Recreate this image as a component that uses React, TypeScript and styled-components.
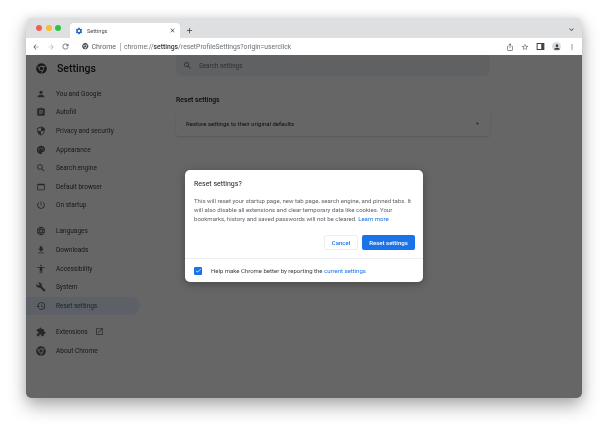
import React from 'react'
import styled, { createGlobalStyle } from 'styled-components'
import { FaChrome } from 'react-icons/fa'
import {
  MdAccessibility,
  MdAdd,
  MdArrowBack,
  MdArrowForward,
  MdAssignment,
  MdBuild,
  MdCheck,
  MdClose,
  MdExpandMore,
  MdExtension,
  MdFileDownload,
  MdIosShare,
  MdLanguage,
  MdMoreVert,
  MdOpenInNew,
  MdPalette,
  MdPerson,
  MdPlayArrow,
  MdPowerSettingsNew,
  MdRefresh,
  MdRestore,
  MdSearch,
  MdSecurity,
  MdSettings,
  MdStarBorder,
  MdWebAsset,
} from 'react-icons/md'

const GlobalStyle = createGlobalStyle`
  html, body {
    margin: 0;
    padding: 0;
    background: #fff;
  }

  body {
    width: 608px;
    height: 432px;
    overflow: hidden;
    font-family: "Roboto", "Liberation Sans", sans-serif;
  }
`

const Stage = styled.div`
  width: 608px;
  height: 432px;
  padding: 18px 26px 34px;
  box-sizing: border-box;
`

const Frame = styled.div`
  border-radius: 5px;
  height: 100%;
  box-shadow: 0 8px 18px rgba(0, 0, 0, .32), 0 0 10px rgba(0, 0, 0, .1);
`

const Window = styled.div`
  position: relative;
  height: 100%;
  display: flex;
  flex-direction: column;
  border-radius: 5px;
  overflow: hidden;
  filter: blur(.35px);
`

const TabStrip = styled.div`
  height: 20px;
  flex-shrink: 0;
  display: flex;
  align-items: flex-end;
  background: #dedfe1;
  padding-left: 10px;
  padding-right: 6px;
`

const Lights = styled.div`
  display: flex;
  gap: 3.5px;
  align-self: center;
  margin-right: 9px;
`

const Light = styled.span<{ $color: string }>`
  width: 6px;
  height: 6px;
  border-radius: 50%;
  background: ${p => p.$color};
`

const Tab = styled.div`
  width: 110px;
  height: 15px;
  display: flex;
  align-items: center;
  gap: 4px;
  padding: 0 4px 0 5px;
  box-sizing: border-box;
  background: #fff;
  border-radius: 4px 4px 0 0;
  font-size: 5.6px;
  color: #4a4c50;
`

const TabTitle = styled.span`
  flex: 1;
`

const NewTab = styled.div`
  display: flex;
  align-items: center;
  height: 15px;
  margin-left: 5px;
  color: #3c4043;
`

const ExpandTabs = styled.div`
  margin-left: auto;
  margin-top: 3px;
  align-self: center;
  display: flex;
  color: #3c4043;
`

const Toolbar = styled.div`
  height: 17px;
  flex-shrink: 0;
  display: flex;
  align-items: center;
  background: #fff;
  padding: 0 6px;
  color: #5f6368;
`

const NavButtons = styled.div`
  display: flex;
  gap: 6.5px;
  align-items: center;
`

const Omnibox = styled.div`
  display: flex;
  align-items: center;
  margin-left: 12px;
  font-size: 7px;
  flex: 1;
  white-space: nowrap;
`

const SiteName = styled.span`
  margin-left: 3px;
  color: #5f6368;
`

const Divider = styled.span`
  width: 1px;
  height: 8px;
  background: #b8babd;
  margin: 0 3.5px;
`

const Url = styled.span`
  font-size: 6.8px;
  color: #6b6f73;

  b {
    color: #35373a;
    font-weight: 500;
  }
`

const ToolIcons = styled.div`
  display: flex;
  align-items: center;
  gap: 7px;
  color: #5f6368;
`

const Avatar = styled.span`
  width: 9px;
  height: 9px;
  display: flex;
  align-items: center;
  justify-content: center;
  border-radius: 50%;
  background: #dadce0;
  color: #3c4043;
`

const Page = styled.div`
  flex: 1;
  display: flex;
  min-height: 0;
  background: #fff;
  color: #202124;
`

const Sidebar = styled.nav`
  width: 114px;
  flex-shrink: 0;
`

const Brand = styled.div`
  height: 27px;
  display: flex;
  align-items: center;
  padding-left: 10px;
  gap: 10px;
  font-size: 10.5px;
  font-weight: 500;
  color: #202124;
`

const NavGroup = styled.div<{ $first?: boolean }>`
  padding-top: ${p => (p.$first ? '2.5px' : '7.5px')};
`

const NavRow = styled.div<{ $active?: boolean }>`
  height: 18.6px;
  display: flex;
  align-items: center;
  padding-left: 10px;
  gap: 10px;
  font-size: 6.5px;
  color: ${p => (p.$active ? '#4b5a74' : '#3c4043')};
  background: ${p => (p.$active ? '#e8f0fe' : 'transparent')};
  border-radius: 0 10px 10px 0;
`

const NavIcon = styled.span`
  width: 10px;
  height: 10px;
  display: flex;
  color: #5f6368;
`

const ExternalIcon = styled.span`
  display: flex;
  margin-left: -3px;
  color: #5f6368;
`

const Main = styled.main`
  width: 314px;
  margin-left: 36px;
`

const SearchBar = styled.div`
  height: 21px;
  display: flex;
  align-items: center;
  gap: 7px;
  padding-left: 7px;
  background: #f1f3f4;
  border-radius: 0 0 6px 6px;
  font-size: 6.3px;
  color: #70757a;
`

const SectionTitle = styled.h2`
  margin: 19px 0 6px;
  font-size: 6.8px;
  line-height: 10px;
  font-weight: 500;
  color: #202124;
`

const Card = styled.div`
  height: 25px;
  display: flex;
  align-items: center;
  justify-content: space-between;
  padding: 0 10px;
  border-radius: 3px;
  background: #fff;
  box-shadow: 0 1px 2px rgba(60, 64, 67, .18);
  font-size: 6px;
  color: #202124;
`

const CardArrow = styled.span`
  display: flex;
  color: #5f6368;
`

const Scrim = styled.div`
  position: absolute;
  left: 0;
  right: 0;
  top: 37px;
  bottom: 0;
  display: flex;
  justify-content: center;
  padding-top: 115px;
  background: rgba(0, 0, 0, .6);
`

const Dialog = styled.div`
  width: 238px;
  height: 112px;
  display: flex;
  flex-direction: column;
  background: #fff;
  border-radius: 5px;
  box-shadow: 0 2px 8px rgba(0, 0, 0, .3);
  color: #202124;
`

const DialogBody = styled.div`
  flex: 1;
  padding: 9px 8px 0 9px;
`

const DialogTitle = styled.div`
  font-size: 7px;
  line-height: 10px;
  color: #202124;
`

const DialogText = styled.p`
  margin: 6.5px 0 0;
  font-size: 6.05px;
  line-height: 9.4px;
  color: #5f6368;
  white-space: nowrap;
`

const InlineLink = styled.span`
  color: #1a73e8;
`

const Actions = styled.div`
  display: flex;
  justify-content: flex-end;
  gap: 4px;
  margin-top: 11px;
`

const Button = styled.button<{ $primary?: boolean }>`
  height: 15px;
  padding: 0;
  width: ${p => (p.$primary ? '53px' : '34px')};
  border: ${p => (p.$primary ? 'none' : '1px solid #eceef0')};
  border-radius: 2px;
  background: ${p => (p.$primary ? '#1a73e8' : '#fff')};
  color: ${p => (p.$primary ? '#fff' : '#1a73e8')};
  font-family: inherit;
  font-size: 6px;
  font-weight: 500;
`

const DialogFooter = styled.div`
  height: 23px;
  flex-shrink: 0;
  display: flex;
  align-items: center;
  padding: 0 9px;
  border-top: 1px solid #eceef0;
  font-size: 6px;
  color: #3c4043;
`

const Checkbox = styled.span`
  width: 8px;
  height: 8px;
  display: flex;
  align-items: center;
  justify-content: center;
  margin-right: 9px;
  background: #1a73e8;
  border-radius: 1px;
  color: #fff;
`

const navGroups = [
  [
    { label: 'You and Google', icon: MdPerson },
    { label: 'Autofill', icon: MdAssignment },
    { label: 'Privacy and security', icon: MdSecurity },
    { label: 'Appearance', icon: MdPalette },
    { label: 'Search engine', icon: MdSearch },
    { label: 'Default browser', icon: MdWebAsset },
    { label: 'On startup', icon: MdPowerSettingsNew },
  ],
  [
    { label: 'Languages', icon: MdLanguage },
    { label: 'Downloads', icon: MdFileDownload },
    { label: 'Accessibility', icon: MdAccessibility },
    { label: 'System', icon: MdBuild },
    { label: 'Reset settings', icon: MdRestore, active: true },
  ],
  [
    { label: 'Extensions', icon: MdExtension, external: true },
    { label: 'About Chrome', icon: FaChrome },
  ],
]

const SidePanelIcon = () => (
  <svg width="9" height="9" viewBox="0 0 12 12">
    <rect x="1.5" y="2" width="9" height="8" fill="none" stroke="#3c4043" strokeWidth="1.3" />
    <rect x="7" y="2" width="3.5" height="8" fill="#3c4043" />
  </svg>
)

const App = () => {
  return (
    <Stage>
      <GlobalStyle />
      <Frame>
        <Window>
          <TabStrip>
            <Lights>
              <Light $color="#ee5f57" />
              <Light $color="#f6bd2e" />
              <Light $color="#29c740" />
            </Lights>
            <Tab>
              <MdSettings size={8} color="#1a5fc8" />
              <TabTitle>Settings</TabTitle>
              <MdClose size={7} color="#3c4043" />
            </Tab>
            <NewTab>
              <MdAdd size={9} />
            </NewTab>
            <ExpandTabs>
              <MdExpandMore size={9} />
            </ExpandTabs>
          </TabStrip>
          <Toolbar>
            <NavButtons>
              <MdArrowBack size={8} />
              <MdArrowForward size={8} color="#b4b6b9" />
              <MdRefresh size={9} />
            </NavButtons>
            <Omnibox>
              <FaChrome size={6.5} color="#4b4e52" />
              <SiteName>Chrome</SiteName>
              <Divider />
              <Url>
                chrome://<b>settings</b>/resetProfileSettings?origin=userclick
              </Url>
            </Omnibox>
            <ToolIcons>
              <MdIosShare size={8} />
              <MdStarBorder size={8} />
              <SidePanelIcon />
              <Avatar>
                <MdPerson size={8} />
              </Avatar>
              <MdMoreVert size={8} />
            </ToolIcons>
          </Toolbar>
          <Page>
            <Sidebar>
              <Brand>
                <FaChrome size={11} color="#3c4043" />
                Settings
              </Brand>
              {navGroups.map((group, index) => (
                <NavGroup key={index} $first={index === 0}>
                  {group.map(item => {
                    const Icon = item.icon
                    return (
                      <NavRow key={item.label} $active={item.active}>
                        <NavIcon>
                          <Icon size={10} />
                        </NavIcon>
                        {item.label}
                        {item.external && (
                          <ExternalIcon>
                            <MdOpenInNew size={9} />
                          </ExternalIcon>
                        )}
                      </NavRow>
                    )
                  })}
                </NavGroup>
              ))}
            </Sidebar>
            <Main>
              <SearchBar>
                <MdSearch size={9} color="#5f6368" />
                Search settings
              </SearchBar>
              <SectionTitle>Reset settings</SectionTitle>
              <Card>
                Restore settings to their original defaults
                <CardArrow>
                  <MdPlayArrow size={5} />
                </CardArrow>
              </Card>
            </Main>
          </Page>
          <Scrim>
            <Dialog>
              <DialogBody>
                <DialogTitle>Reset settings?</DialogTitle>
                <DialogText>
                  This will reset your startup page, new tab page, search engine, and pinned tabs. It
                  <br />
                  will also disable all extensions and clear temporary data like cookies. Your
                  <br />
                  bookmarks, history and saved passwords will not be cleared. <InlineLink>Learn more</InlineLink>
                </DialogText>
                <Actions>
                  <Button>Cancel</Button>
                  <Button $primary>Reset settings</Button>
                </Actions>
              </DialogBody>
              <DialogFooter>
                <Checkbox>
                  <MdCheck size={7} />
                </Checkbox>
                Help make Chrome better by reporting the&nbsp;<InlineLink>current settings</InlineLink>
              </DialogFooter>
            </Dialog>
          </Scrim>
        </Window>
      </Frame>
    </Stage>
  )
}

export default App
